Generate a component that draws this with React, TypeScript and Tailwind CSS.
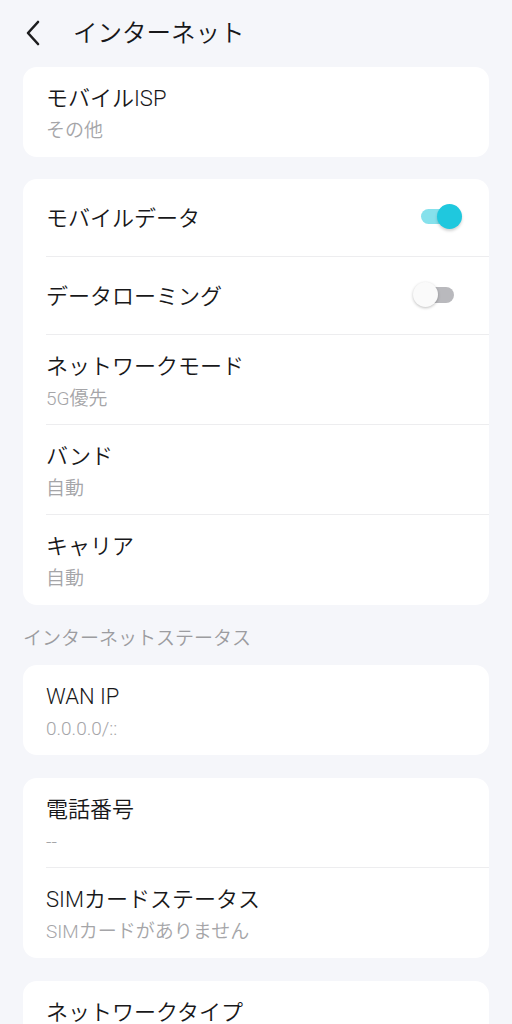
import React from "react";

const font = { fontFamily: 'Roboto, "Noto Sans CJK JP", "Noto Sans", sans-serif' };

function TwoLine({ title, sub, divider }: { title: string; sub: string; divider?: boolean }) {
  return (
    <div className="pl-[23px]">
      <div className={"h-[90px] pt-[17px] pr-[23px] " + (divider ? "border-b border-[#ededef]" : "")}>
        <div className="text-[22px] leading-[30px] font-[350] text-[#18181a]">{title}</div>
        <div className="mt-[4px] text-[19px] leading-[26px] font-[350] text-[#a5a5a8]">{sub}</div>
      </div>
    </div>
  );
}

function ToggleRow({ title, on, divider }: { title: string; on: boolean; divider?: boolean }) {
  return (
    <div className="pl-[23px]">
      <div className={"h-[78px] flex items-center justify-between " + (divider ? "border-b border-[#ededef]" : "")}>
        <div className="mt-[3px] text-[22px] leading-[30px] font-[350] text-[#18181a]">{title}</div>
        {on ? (
          <div className="relative w-[41px] h-[25px] mr-[27px] mt-[-2px]">
            <div className="absolute left-0 top-[5px] w-[36px] h-[15px] rounded-full bg-[#86e1ec]" />
            <div className="absolute right-0 top-0 w-[25px] h-[25px] rounded-full bg-[#1fc8de] shadow-[0_2px_3px_rgba(0,0,0,0.18)]" />
          </div>
        ) : (
          <div className="relative w-[41px] h-[25px] mr-[35px] mt-[-2px]">
            <div className="absolute right-0 top-[5px] w-[36px] h-[16px] rounded-full bg-[#b9b9bd]" />
            <div className="absolute left-0 top-0 w-[25px] h-[25px] rounded-full bg-[#fafafa] shadow-[0_1px_3px_rgba(0,0,0,0.25)]" />
          </div>
        )}
      </div>
    </div>
  );
}

function Card({ children }: { children: React.ReactNode }) {
  return <div className="mx-[23px] rounded-[14px] bg-white overflow-hidden">{children}</div>;
}

export default function App() {
  return (
    <div style={font} className="w-[512px] h-[1024px] overflow-hidden bg-[#f5f6fa]">
      <div className="h-[66px] flex items-center">
        <svg width="20" height="26" viewBox="0 0 20 26" className="ml-[23px]" fill="none">
          <path d="M15 2 L5 13 L15 24" stroke="#1c1c1e" strokeWidth="2.6" strokeLinecap="round" strokeLinejoin="round" />
        </svg>
        <div className="ml-[30px] mt-[2px] text-[24.5px] leading-[32px] font-[350] text-[#18181a]">インターネット</div>
      </div>
      <div className="mt-[1px] flex flex-col">
        <Card>
          <TwoLine title="モバイルISP" sub="その他" />
        </Card>
        <div className="h-[22px]" />
        <Card>
          <ToggleRow title="モバイルデータ" on divider />
          <ToggleRow title="データローミング" on={false} divider />
          <TwoLine title="ネットワークモード" sub="5G優先" divider />
          <TwoLine title="バンド" sub="自動" divider />
          <TwoLine title="キャリア" sub="自動" />
        </Card>
        <div className="mt-[21px] mb-[13px] pl-[23px] text-[19px] leading-[26px] font-[350] text-[#9c9ca0]">インターネットステータス</div>
        <Card>
          <TwoLine title="WAN IP" sub="0.0.0.0/::" />
        </Card>
        <div className="h-[23px]" />
        <Card>
          <TwoLine title="電話番号" sub="--" divider />
          <TwoLine title="SIMカードステータス" sub="SIMカードがありません" />
        </Card>
        <div className="h-[23px]" />
        <Card>
          <TwoLine title="ネットワークタイプ" sub="" />
        </Card>
      </div>
    </div>
  );
}
